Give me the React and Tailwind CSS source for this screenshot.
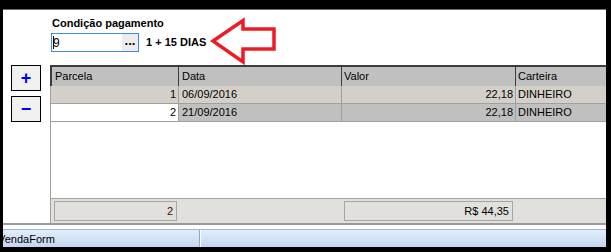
import React from "react";

const rows = [
  { parcela: "1", data: "06/09/2016", valor: "22,18", carteira: "DINHEIRO" },
  { parcela: "2", data: "21/09/2016", valor: "22,18", carteira: "DINHEIRO" },
];

const GridRow = ({ row, first }) => (
  <div
    className={`flex h-[18px] border-b border-[#a0a0a0] text-[11px] leading-[17px] ${
      first ? "bg-[#d4d0c8]" : "bg-[#c0c0c0]"
    }`}
  >
    <div className={`w-[128px] border-r border-[#a0a0a0] pr-[2px] text-right ${first ? "" : "bg-white"}`}>
      {row.parcela}
    </div>
    <div className="w-[163px] border-r border-[#a0a0a0] pl-[3px]">{row.data}</div>
    <div className="w-[174px] border-r border-[#a0a0a0] pr-[2px] text-right">{row.valor}</div>
    <div className="flex-1 pl-[2px]">{row.carteira}</div>
  </div>
);

const SideButton = ({ children }) => (
  <button className="flex h-[26px] w-[30px] items-center justify-center border border-black bg-[#f0f0f0] text-[18px] font-bold leading-none text-[#0000ff]">
    {children}
  </button>
);

export default function App() {
  return (
    <div className="flex h-[252px] w-[611px] flex-col bg-black pb-[5px] pl-[3px] pr-[5px] pt-[9px] font-['Liberation_Sans',Arial,sans-serif] text-black">
      <div className="flex flex-1 flex-col overflow-hidden border-t border-[#6d6d6d] bg-white">
        {/* form */}
        <div className="flex h-[215px] flex-col border-b-2 border-[#9a9a9a]">
          {/* condição pagamento */}
          <div className="h-[55px] pl-[48px] pt-[7px]">
            <div className="ml-px h-[13px] text-[11px] font-bold leading-[13px]">Condição pagamento</div>
            <div className="mt-[3px] flex items-start">
              <div className="flex h-[19px] w-[88px] items-center border border-[#3c8ce4] pl-[1px]">
                <span className="h-[13px] w-px bg-black" />
                <span className="-ml-px text-[12px] leading-none">9</span>
                <span className="ml-auto flex h-full w-[16px] items-center justify-center bg-[#ececec] pb-[4px] text-[13px] font-bold leading-none">
                  ...
                </span>
              </div>
              <span className="ml-[7px] self-center text-[11px] font-bold leading-none">1 + 15 DIAS</span>
              <svg width="70" height="49" viewBox="0 0 70 49" className="-mb-[14px] -mt-[16px] ml-[3px]">
                <path
                  d="M4 24 L34 3.5 L34 12 L65 12 L65 32 L34 32 L34 45 Z"
                  fill="white"
                  stroke="#ed1c24"
                  strokeWidth="3.5"
                  strokeLinejoin="miter"
                />
              </svg>
            </div>
          </div>

          {/* buttons + grid */}
          <div className="flex flex-1">
            <div className="flex w-[47px] flex-col gap-[5px] pl-[8px]">
              <SideButton>+</SideButton>
              <SideButton>−</SideButton>
            </div>
            <div className="flex flex-1 flex-col border-l border-[#a0a0a0]">
              <div className="-ml-px flex h-[21px] border-l-2 border-t-2 border-[#3c3c3c] bg-[#c0c0c0] text-[11px] leading-[19px]">
                <div className="w-[127px] border-r border-[#3c3c3c] pl-[3px]">Parcela</div>
                <div className="w-[163px] border-r border-[#3c3c3c] pl-[3px]">Data</div>
                <div className="w-[174px] border-r border-[#3c3c3c] pl-[2px]">Valor</div>
                <div className="flex-1 pl-[2px]">Carteira</div>
              </div>
              {rows.map((r, i) => (
                <GridRow key={r.parcela} row={r} first={i === 0} />
              ))}
              <div className="flex-1" />
              <div className="flex h-[25px] border-t border-[#a0a0a0] bg-[#e2e0dc] pt-[2px] text-[11px]">
                <div className="ml-[3px] h-[20px] w-[123px] border border-[#a5a5a5] pr-[3px] text-right leading-[18px] text-[#3a0a0a]">
                  2
                </div>
                <div className="ml-[167px] h-[20px] w-[169px] border border-[#a5a5a5] pr-[3px] text-right leading-[18px]">
                  R$ 44,35
                </div>
              </div>
            </div>
          </div>
        </div>

        {/* status bar */}
        <div className="mt-[4px] flex h-[18px] border-t border-[#9db3d3] bg-gradient-to-b from-[#e4eefa] to-[#c2d6f0] text-[11px] leading-[17px]">
          <div className="w-[197px] overflow-hidden border-r border-[#8fa6c4]">
            <span className="-ml-[5px] inline-block pt-[1px]">VendaForm</span>
          </div>
          <div className="flex-1 border-l border-white" />
        </div>
      </div>
    </div>
  );
}
